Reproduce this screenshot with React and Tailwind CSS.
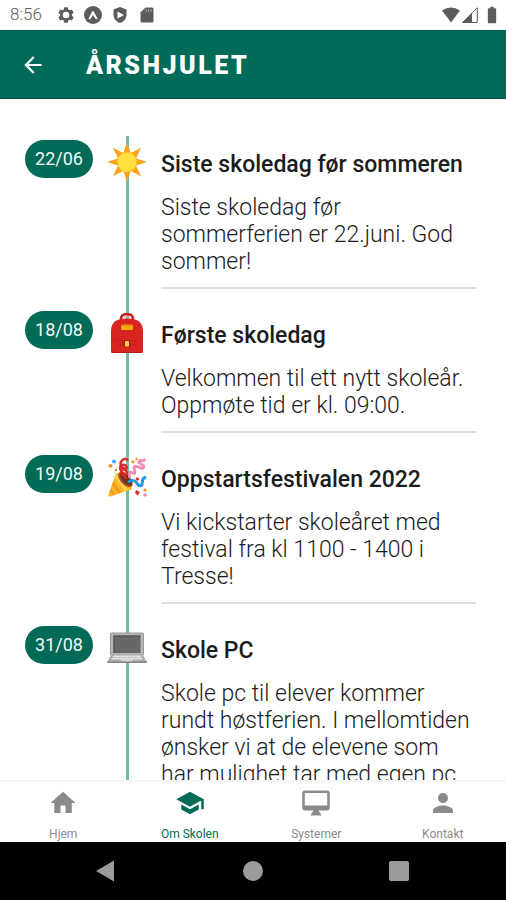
import {
  MdArrowBack,
  MdBatteryFull,
  MdHome,
  MdOutlineDesktopMac,
  MdPerson,
  MdSchool,
} from 'react-icons/md';

function SunIcon() {
  return (
    <svg className="w-10 h-10" viewBox="0 0 40 40" aria-hidden="true">
      {[0, 45, 90, 135, 180, 225, 270, 315].map((angle) => (
        <path key={angle} d="M20 0 L23.8 11.5 H16.2 Z" fill="#fba11b" transform={`rotate(${angle} 20 20)`} />
      ))}
      <circle cx="20" cy="20" r="10.2" fill="#fdc52c" />
      <circle cx="20" cy="20" r="9.2" fill="#fee13a" />
    </svg>
  );
}

function BackpackIcon() {
  return (
    <svg className="w-10 h-10" viewBox="0 0 40 40" aria-hidden="true">
      <path d="M14 7 C14 2 16 1.2 20 1.2 S26 2 26 7" fill="none" stroke="#c5221f" strokeWidth="2.6" />
      <path d="M17 4.6 C18 3 22 3 23 4.6" fill="none" stroke="#e9b0ad" strokeWidth="1.4" />
      <path d="M4 18 C4 9 10 5.6 20 5.6 S36 9 36 18 V38 Q36 40 34 40 H6 Q4 40 4 38 Z" fill="#d9251f" />
      <path d="M4 36.5 V38 Q4 40 6 40 H34 Q36 40 36 38 V36.5 Q36 39 33 39 H7 Q4 39 4 36.5 Z" fill="#b71c1c" />
      <path d="M7.5 27.5 H32.5" stroke="#bf211e" strokeWidth="1" />
      <path d="M8 31 Q14 32.5 18 31 M32 31 Q26 32.5 22 31" fill="none" stroke="#c4221f" strokeWidth="1" />
      <rect x="14" y="11.5" width="12" height="5.5" rx="1.5" fill="#f6a80f" />
      <path d="M15 12.5 H25" stroke="#e08c0d" strokeWidth="1" />
      <rect x="16.5" y="27.5" width="7" height="6.5" rx="1.5" fill="#a51818" />
      <rect x="18" y="28" width="4" height="5.5" rx="1" fill="#fdd835" />
    </svg>
  );
}

function PartyIcon() {
  return (
    <svg className="w-10 h-10" viewBox="0 0 40 40" aria-hidden="true">
      <path d="M9 16.5 L1.2 38 Q1 40 3 39.4 L24.5 32.5 L25 27 L14 15 Z" fill="#fbb827" />
      <path d="M6.5 24 L14.500 35.600 L11.500 36.600 L5 28.500 Z M4 31.500 L8.500 37.600 L6 38.400 L2.800 34.800 Z" fill="#f39a1e" />
      <path d="M9.500 17 L21 33.600 L18 34.500 L8 20.500 Z" fill="#fdd34a" />
      <ellipse cx="18.500" cy="22.500" rx="5" ry="9.200" transform="rotate(-42 18.500 22.500)" fill="#a04a24" />
      <ellipse cx="19" cy="21.800" rx="3.600" ry="7.600" transform="rotate(-42 19 21.800)" fill="#70301c" />
      <path d="M19 21 C15 17 12.500 14 15 12.500 C18 11.500 21 15.500 19.500 17 C16 18 12 12 13.500 9 C16 6 21 9 19.500 11.500 C15 12.500 12 7 14.500 4 C16.500 1.500 19 1.500 20.500 3" fill="none" stroke="#df2a2b" strokeWidth="2.400" strokeLinecap="round" />
      <path d="M22.500 20 C21.500 16 23 14.500 25 15.500 S28 17.500 28 14.500 S25.500 11 28 9.500 S34 13.500 36.500 10.500 S30.500 7 32 4.500 S36.500 5 37.500 3" fill="none" stroke="#f08bb7" strokeWidth="2.800" strokeLinecap="round" />
      <path d="M22 24.500 C24 23 27 23 29 25 S31 29.500 34 28.500 S33 22.500 38 20.500" fill="none" stroke="#2998e8" strokeWidth="3" strokeLinecap="round" />
      <g fill="#f58a22">
        <path d="M3.500 6.500 L6 9 L3.500 11 L1 9 Z" />
        <path d="M25.500 3 L28 4.500 L26.500 6.500 L24 5.500 Z" />
        <circle cx="9" cy="13" r="1.200" />
        <circle cx="29.500" cy="2" r="1.200" />
        <circle cx="38" cy="33" r="1.600" />
      </g>
      <circle cx="7" cy="4.500" r="2" fill="#42a5f5" />
      <path d="M30 20 L32.500 22 L30.500 24 L28.500 22 Z M29 33 L33 35 L31 38.500 L28 36 Z" fill="#dc2a31" />
      <circle cx="38" cy="38" r="1.800" fill="#f08bb7" />
    </svg>
  );
}

function LaptopIcon() {
  return (
    <svg className="w-10 h-10" viewBox="0 0 40 40" aria-hidden="true">
      <rect x="3" y="4.500" width="34" height="23" rx="1.500" fill="#9a9a9a" />
      <rect x="4" y="5.500" width="32" height="21.500" rx="1" fill="#b5b5b5" />
      <rect x="6.500" y="7.500" width="27" height="17.500" fill="#666767" />
      <path d="M7 25 V8 H33.500" fill="none" stroke="#4c4c4c" />
      <path d="M4.500 26.500 H35.500 L40 34 H0 Z" fill="#aaa" />
      <path d="M6.500 27.500 H33.500 L36 31.500 H4 Z" fill="#e6e6e6" />
      <path d="M5.500 29.500 H34.500" stroke="#b0b0b0" strokeWidth="1" strokeDasharray="2 1" />
      <path d="M15 31.500 H25 L26 33.500 H14 Z" fill="#d8d8d8" />
      <path d="M0 33.500 H40 V35 H0 Z" fill="#858585" />
    </svg>
  );
}

const events = [
  {
    date: '22/06',
    icon: SunIcon,
    title: 'Siste skoledag før sommeren',
    text: 'Siste skoledag før sommerferien er 22.juni. God sommer!',
  },
  {
    date: '18/08',
    icon: BackpackIcon,
    title: 'Første skoledag',
    text: 'Velkommen til ett nytt skoleår. Oppmøte tid er kl. 09:00.',
  },
  {
    date: '19/08',
    icon: PartyIcon,
    title: 'Oppstartsfestivalen 2022',
    text: 'Vi kickstarter skoleåret med festival fra kl 1100 - 1400 i Tresse!',
  },
  {
    date: '31/08',
    icon: LaptopIcon,
    title: 'Skole PC',
    text: 'Skole pc til elever kommer rundt høstferien. I mellomtiden ønsker vi at de elevene som har mulighet tar med egen pc',
  },
];

const tabs = [
  { label: 'Hjem', icon: MdHome },
  { label: 'Om Skolen', icon: MdSchool, active: true },
  { label: 'Systemer', icon: MdOutlineDesktopMac },
  { label: 'Kontakt', icon: MdPerson },
];

function StatusBar() {
  return (
    <div className="flex h-[30px] shrink-0 items-center justify-between pl-[10px] pr-1 text-[#5c5c5c]">
      <div className="flex items-center">
        <span className="w-[47px] text-[17px] font-light">8:56</span>
        <svg className="h-[18px] w-[18px]" viewBox="0 0 18 18" aria-hidden="true">
          <circle cx="9" cy="9" r="4.600" fill="none" stroke="currentColor" strokeWidth="2.600" />
          {[0, 60, 120, 180, 240, 300].map((angle) => (
            <path key={angle} d="M7.200 1.200 H10.800 L11.400 4.500 H6.600 Z" fill="currentColor" transform={`rotate(${angle} 9 9)`} />
          ))}
        </svg>
        <svg className="ml-[9px] h-[18px] w-[18px]" viewBox="0 0 18 18" aria-hidden="true">
          <circle cx="9" cy="9" r="9" fill="currentColor" />
          <path d="M4.500 12.800 L8 5.800 Q9 4.200 10 5.800 L13.500 12.800 L12 13.400 L9 9 L6 13.400 Z" fill="white" />
        </svg>
        <svg className="ml-[10px] h-[18px] w-4" viewBox="0 0 16 18" aria-hidden="true">
          <path d="M8 1 L14.500 3.500 V8.500 C14.500 12.500 12 15.800 8 17 C4 15.800 1.500 12.500 1.500 8.500 V3.500 Z" fill="currentColor" />
          <path d="M5.500 5.500 L12 9 L5.500 12.500 Z" fill="white" />
        </svg>
        <svg className="ml-3 h-4 w-[14px]" viewBox="0 0 14 16" aria-hidden="true">
          <path d="M5.500 0.500 H12 Q13.500 0.500 13.500 2 V14 Q13.500 15.500 12 15.500 H2 Q0.500 15.500 0.500 14 V5.500 Z" fill="currentColor" />
          <path d="M6 2 V5 M8.500 2 V5 M11 2 V5" stroke="#aaa" strokeWidth="1" />
        </svg>
      </div>
      <div className="flex items-center">
        <svg className="h-4 w-[18px]" viewBox="0 0 18 16" aria-hidden="true">
          <path d="M9 15.500 L0 3.500 Q9 -2.500 18 3.500 Z" fill="currentColor" />
        </svg>
        <svg className="ml-[2px] h-4 w-4" viewBox="0 0 16 16" aria-hidden="true">
          <path d="M0.500 15.500 L15.300 0.800 V15.500 Z" fill="none" stroke="currentColor" />
          <path d="M0 16 L10 6 V16 Z" fill="currentColor" />
        </svg>
        <MdBatteryFull className="ml-1 h-5 w-5" aria-hidden="true" />
      </div>
    </div>
  );
}

function EventRow({ event }) {
  const Icon = event.icon;

  return (
    <li className="flex">
      <time className="mt-1 flex h-[38px] w-[68px] shrink-0 items-center justify-center rounded-full bg-[#026b58] text-lg text-[#f0f8f6]">
        {event.date}
      </time>
      <div className="relative ml-[14px] w-10 shrink-0">
        <div className="mx-auto h-full w-[3px] bg-[#71bfa2]" />
        <div className="absolute top-[6px] left-0">
          <Icon />
        </div>
      </div>
      <div className="ml-[14px] flex-1 pt-[15px] pb-[18px]">
        <div className="border-b-2 border-[#dedede] pb-3">
          <h2 className="text-[23px] leading-[27px] font-medium text-[#1c1c1c]">{event.title}</h2>
          <p className="mt-4 text-[23px] leading-[27px] font-light text-[#1c1c1c]">{event.text}</p>
        </div>
      </div>
    </li>
  );
}

export default function App() {
  return (
    <div className="flex h-screen flex-col overflow-hidden bg-white font-[Roboto,sans-serif]">
      <StatusBar />
      <header className="flex h-[69px] shrink-0 items-center border-y border-[#035243] bg-[#016b5a] px-5 text-white">
        <button type="button" aria-label="Tilbake">
          <MdArrowBack className="h-[26px] w-[26px]" />
        </button>
        <h1 className="ml-10 pt-[2px] text-[25px] font-black tracking-widest">ÅRSHJULET</h1>
      </header>
      <main className="min-h-0 flex-1 overflow-y-auto pt-[37px] pr-[30px] pl-[25px] [scrollbar-width:none]">
        <ol>
          {events.map((event) => (
            <EventRow key={event.date} event={event} />
          ))}
        </ol>
      </main>
      <nav className="grid h-[62px] shrink-0 grid-cols-4 border-t-2 border-[#f5f5f5] bg-white">
        {tabs.map(({ label, icon: TabIcon, active }) => (
          <a
            key={label}
            href="#"
            aria-current={active ? 'page' : undefined}
            className={`flex flex-col items-center justify-between pt-[6px] text-xs ${active ? 'text-[#026b58]' : 'text-[#8a8a8a]'}`}
          >
            <TabIcon className="h-[30px] w-[30px]" aria-hidden="true" />
            {label}
          </a>
        ))}
      </nav>
      <div className="grid h-[58px] shrink-0 grid-cols-[1fr_40px_1fr] items-center bg-black text-[#9b9b9b]">
        <button type="button" aria-label="Back" className="justify-self-end pr-[118px]">
          <svg className="h-[22px] w-5" viewBox="0 0 20 22" aria-hidden="true">
            <path d="M1 11 L19 0.500 V21.500 Z" fill="currentColor" />
          </svg>
        </button>
        <button type="button" aria-label="Home" className="h-5 w-5 justify-self-center rounded-full bg-current" />
        <button type="button" aria-label="Overview" className="ml-[116px] h-5 w-5 rounded-xs bg-current" />
      </div>
    </div>
  );
}
